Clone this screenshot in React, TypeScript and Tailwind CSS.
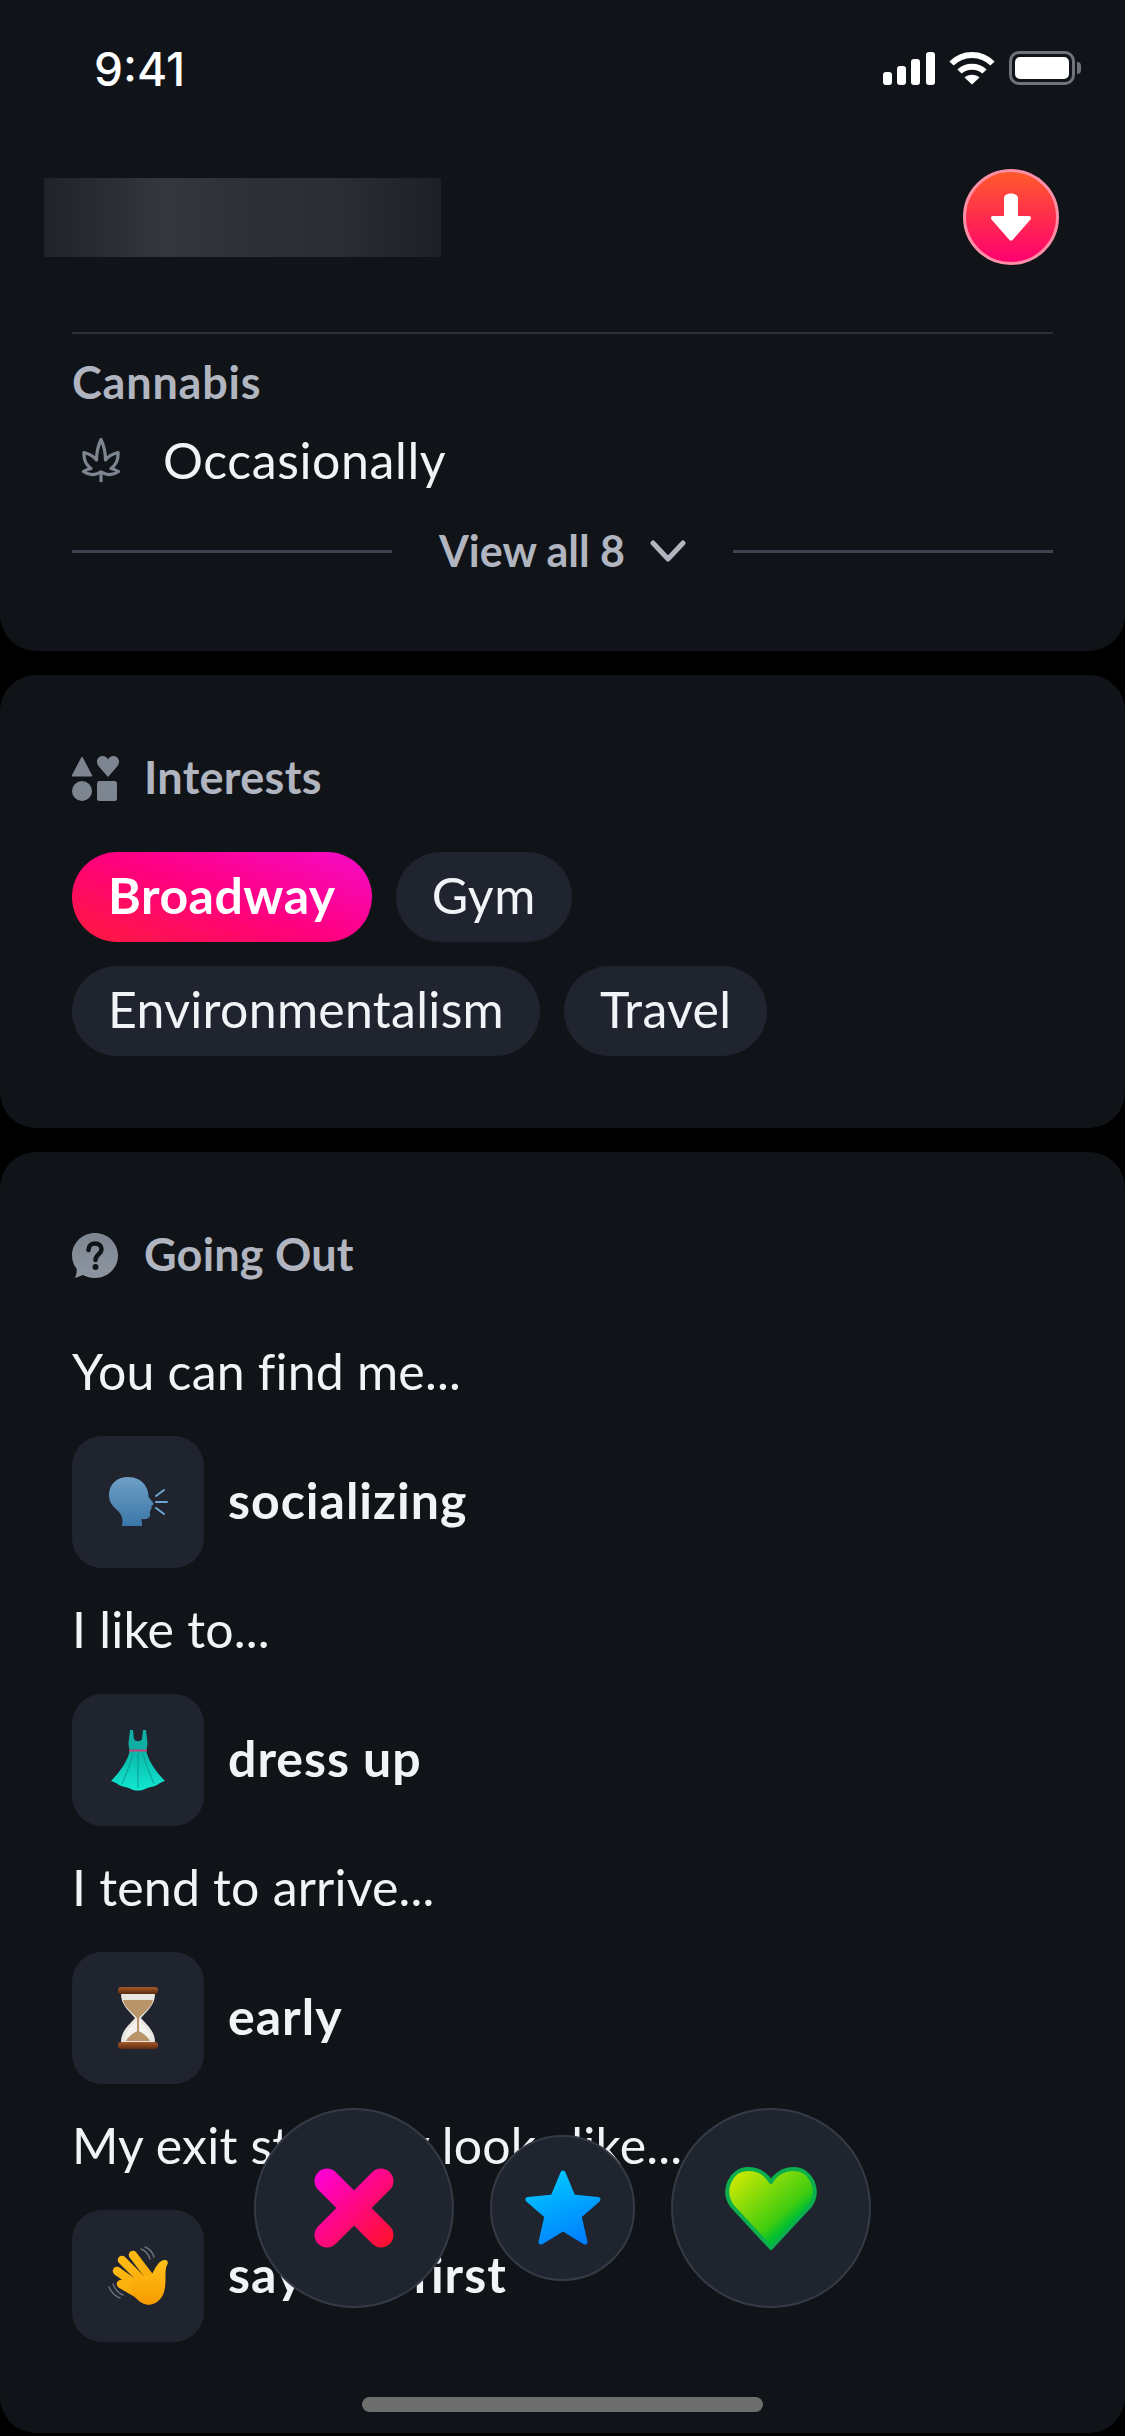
const promptRows = [
  { label: "You can find me...", answer: "socializing", emoji: "talk" },
  { label: "I like to...", answer: "dress up", emoji: "dress" },
  { label: "I tend to arrive...", answer: "early", emoji: "hourglass" },
  { label: "My exit strategy looks like...", answer: "say bye first", emoji: "wave" },
];

function StatusIcons() {
  return (
    <div className="flex items-center gap-[14px]">
      <svg width="52" height="33" viewBox="0 0 52 33" fill="#fff">
        <rect x="0" y="20" width="9" height="13" rx="3" />
        <rect x="14" y="14" width="9" height="19" rx="3" />
        <rect x="28" y="7" width="9" height="26" rx="3" />
        <rect x="43" y="0" width="9" height="33" rx="3" />
      </svg>
      <svg width="46" height="34" viewBox="0 0 46 34" fill="none" stroke="#fff" strokeWidth="6">
        <path d="M2.5 12.5C13.5 1 32.500 1 43.500 12.500" />
        <path d="M10.500 20.500C17 14 29 14 35.500 20.500" />
        <path d="M23 33.500L15.500 26.500C19.500 22.800 26.500 22.800 30.500 26.500Z" fill="#fff" stroke="none" />
      </svg>
      <div className="flex items-center gap-[2px]">
        <div className="w-[66px] h-[34px] rounded-[10px] border-[3px] border-[#70747a] p-[3px]">
          <div className="w-full h-full rounded-[5px] bg-white" />
        </div>
        <div className="w-[4px] h-[12px] rounded-r-full bg-[#70747a]" />
      </div>
    </div>
  );
}

function LeafIcon() {
  return (
    <svg width="42" height="44" viewBox="0 0 42 44" fill="none" stroke="#7d8590" strokeWidth="3.200" strokeLinejoin="round">
      <path d="M21 1.500C24 8 25.500 14 25.500 22C28 18.500 32 16 38 14.500C38.500 21.500 36 27 31 30.500C33.500 31 36 32 38.500 33.500C34.500 36.500 29.500 37.500 24.500 35.500L21 34L17.500 35.500C12.500 37.500 7.500 36.500 3.500 33.500C6 32 8.500 31 11 30.500C6 27 3.500 21.500 4 14.500C10 16 14 18.500 16.500 22C16.500 14 18 8 21 1.500Z" />
      <path d="M21 34V44" strokeLinecap="round" />
    </svg>
  );
}

function ShapesIcon() {
  return (
    <svg width="47" height="45" viewBox="0 0 47 45" fill="#7d8590">
      <path d="M10 1L20 20H0Z" stroke="#7d8590" strokeWidth="1" strokeLinejoin="round" />
      <circle cx="10" cy="35" r="10" />
      <path d="M36 21L26.500 10C23 5.500 26 0 30.500 0C33 0 35 1.500 36 3.500C37 1.500 39 0 41.500 0C46 0 49 5.500 45.500 10Z" />
      <rect x="25" y="25" width="20" height="20" rx="2.500" />
    </svg>
  );
}

function QuestionIcon() {
  return (
    <svg width="46" height="45" viewBox="0 0 46 45">
      <defs>
        <linearGradient id="bubble" x1="0" y1="0" x2="0" y2="1">
          <stop offset="0" stopColor="#7d8590" />
          <stop offset="1" stopColor="#8d95a0" />
        </linearGradient>
      </defs>
      <path d="M23 0C35.700 0 46 10 46 22.500C46 35 35.700 45 23 45C18.500 45 14.500 44 11 42L3 45C4.500 41.500 5 38.500 4.500 35.500C1.700 32 0 27.500 0 22.500C0 10 10.300 0 23 0Z" fill="url(#bubble)" />
      <path d="M16.500 17C16.500 13 19.500 10.500 23 10.500C27 10.500 29.500 13 29.500 16.500C29.500 21 23.500 21.500 23.500 27" fill="none" stroke="#101418" strokeWidth="4.500" strokeLinecap="round" />
      <circle cx="23.500" cy="34" r="3" fill="#101418" />
    </svg>
  );
}

function TalkEmoji() {
  return (
    <svg width="59" height="50" viewBox="0 0 59 50">
      <defs>
        <linearGradient id="head" x1="0" y1="0" x2="0" y2="1">
          <stop offset="0" stopColor="#6f9fc6" />
          <stop offset="1" stopColor="#3a77a8" />
        </linearGradient>
      </defs>
      <path d="M19 0C8 0 0 7 0 18C0 25 3.500 29 8 33C11 36 15 40 13 49H33C33 46 33 44 32 42C36 42.500 40 42 41 39C41.500 37 41 36 40.500 35C41.500 34.500 42 33.500 41.500 32.500C43 31.500 43 30 42 29C44 28.500 45 27 44 25.500L39.500 20C40 12 34 0 19 0Z" fill="url(#head)" />
      <g stroke="#6fa5cf" strokeWidth="2" strokeLinecap="round">
        <path d="M47 19L55 13" />
        <path d="M47 25H58" />
        <path d="M47 31L55 37" />
      </g>
    </svg>
  );
}

function DressEmoji() {
  return (
    <svg width="54" height="62" viewBox="0 0 54 62">
      <defs>
        <linearGradient id="skirt" x1="0" y1="0" x2="0" y2="1">
          <stop offset="0" stopColor="#0bb5a8" />
          <stop offset="1" stopColor="#10e8d0" />
        </linearGradient>
      </defs>
      <path d="M19 1H22L23 10C24.500 13 29.500 13 31 10L32 1H35L36 10C37 14 36.500 18 35 22H19C17.500 18 17 14 18 10Z" fill="#0fb0a3" />
      <path d="M19 21C17 32 8 44 0 52C3 53 6 54 8 56C12 58 16 58 20 60C24 62 30 62 34 60C38 58 42 58 46 56C48 54 51 53 54 52C46 44 37 32 35 21Z" fill="url(#skirt)" />
      <path d="M18 21.500H36" stroke="#c7407a" strokeWidth="2" />
      <g stroke="#0a9d92" strokeWidth="1" fill="none">
        <path d="M22 24C20 34 15 45 11 55" />
        <path d="M27 24V59" />
        <path d="M32 24C34 34 39 45 43 55" />
      </g>
    </svg>
  );
}

function HourglassEmoji() {
  return (
    <svg width="42" height="62" viewBox="0 0 42 62">
      <defs>
        <linearGradient id="wood" x1="0" y1="0" x2="0" y2="1">
          <stop offset="0" stopColor="#a55a28" />
          <stop offset="1" stopColor="#5e2c12" />
        </linearGradient>
      </defs>
      <path d="M4 7H38C38 18 30 24 24 31C30 38 38 44 38 55H4C4 44 12 38 18 31C12 24 4 18 4 7Z" fill="#e9e6e2" />
      <path d="M6 13H36C35 20 27 25 22 31H20C15 25 7 20 6 13Z" fill="#b89468" />
      <path d="M20 31H22V44C27 47 31 50 33 54H9C11 50 15 47 20 44Z" fill="#b89468" />
      <path d="M9 47C12 41 17 37 20 33V44C16 46 12 48 9 52Z" fill="#f3f1ee" />
      <path d="M33 47C30 41 25 37 22 33V44C26 46 30 48 33 52Z" fill="#f3f1ee" />
      <rect x="1" y="0" width="40" height="7" rx="3" fill="url(#wood)" />
      <rect x="1" y="55" width="40" height="7" rx="3" fill="url(#wood)" />
    </svg>
  );
}

function WaveEmoji() {
  return (
    <svg width="61" height="60" viewBox="0 0 61 60">
      <defs>
        <linearGradient id="hand" x1="0" y1="0" x2="0" y2="1">
          <stop offset="0" stopColor="#ffc21a" />
          <stop offset="1" stopColor="#f79a00" />
        </linearGradient>
        <linearGradient id="fingers" gradientUnits="userSpaceOnUse" x1="10" y1="5" x2="50" y2="55">
          <stop offset="0" stopColor="#ffbf16" />
          <stop offset="1" stopColor="#f9a204" />
        </linearGradient>
      </defs>
      <g fill="none" stroke="#6a7078" strokeWidth="1.500" strokeLinecap="round">
        <path d="M33 3C38 5 41 9 42 13" />
        <path d="M37 1C42 3 45 7 46 11" />
        <path d="M1 41C3 46 7 50 12 52" />
        <path d="M5 38C7 43 10 47 15 49" />
      </g>
      <g stroke="url(#fingers)" strokeWidth="8.500" strokeLinecap="round">
        <path d="M25 9L41 30" />
        <path d="M14 14L34 34" />
        <path d="M9 25L30 40" />
        <path d="M13 38L32 49" />
      </g>
      <path d="M57 14C60 14 60.500 17 59 19C56 24 59 36 56 46C53 56 43 62 34 57C26 52 20 44 24 34L44 28C48 21 51 14 57 14Z" fill="url(#hand)" />
    </svg>
  );
}

const emojis: Record<string, React.ReactNode> = {
  talk: <TalkEmoji />,
  dress: <DressEmoji />,
  hourglass: <HourglassEmoji />,
  wave: <WaveEmoji />,
};

function ActionButtons() {
  return (
    <div className="absolute left-0 top-[2108px] w-full flex items-center justify-center gap-9">
      <div className="w-[200px] h-[200px] rounded-full bg-[#1f242e] border-2 border-[#353b45] flex items-center justify-center">
        <svg width="80" height="80" viewBox="0 0 80 80" fill="none">
          <defs>
            <linearGradient id="cross" gradientUnits="userSpaceOnUse" x1="5" y1="5" x2="75" y2="75">
              <stop offset="0" stopColor="#ff00d4" />
              <stop offset="1" stopColor="#ff1030" />
            </linearGradient>
          </defs>
          <path d="M13 13L67 67M67 13L13 67" stroke="url(#cross)" strokeWidth="25" strokeLinecap="round" />
        </svg>
      </div>
      <div className="w-[145px] h-[146px] rounded-full bg-[#1f242e] border-2 border-[#353b45] flex items-center justify-center">
        <svg width="78" height="76" viewBox="0 0 78 76">
          <defs>
            <linearGradient id="star" x1="0.300" y1="0" x2="0.700" y2="1">
              <stop offset="0" stopColor="#00c8ff" />
              <stop offset="1" stopColor="#0080ff" />
            </linearGradient>
          </defs>
          <path d="M39 3L49 27L74 29.500L55 46L61 72L39 58.500L17 72L23 46L4 29.500L29 27Z" fill="url(#star)" stroke="url(#star)" strokeWidth="5" strokeLinejoin="round" />
        </svg>
      </div>
      <div className="w-[200px] h-[200px] rounded-full bg-[#1f242e] border-2 border-[#353b45] flex items-center justify-center">
        <svg width="94" height="85" viewBox="0 0 94 85">
          <defs>
            <linearGradient id="heart" x1="0" y1="0" x2="1" y2="1">
              <stop offset="0" stopColor="#e2ee00" />
              <stop offset="0.600" stopColor="#40cc10" />
              <stop offset="0.700" stopColor="#00c030" />
              <stop offset="1" stopColor="#00c030" />
            </linearGradient>
          </defs>
          <path d="M47 82L8 40C-3 24 7 3 24 3C35 3 43 9 47 16C51 9 59 3 70 3C87 3 97 24 86 40Z" fill="url(#heart)" stroke="#0dae4e" strokeWidth="4" strokeLinejoin="round" />
        </svg>
      </div>
    </div>
  );
}

export default function App() {
  return (
    <div className="relative w-[1125px] h-[2436px] overflow-hidden bg-black font-[family-name:Lato,sans-serif] text-[#f1f3f6]">
      {/* Top card */}
      <div className="h-[651px] bg-[#101418] rounded-b-[36px]">
        <div className="h-[136px] flex items-center justify-between pl-[94px] pr-[44px]">
          <span className="font-[family-name:Inter,sans-serif] text-[46px] font-medium text-white pt-[2px]">9:41</span>
          <StatusIcons />
        </div>

        <div className="mt-[33px] h-[96px] pl-[44px] pr-[66px] flex items-center justify-between">
          <div className="w-[397px] h-[79px] bg-[linear-gradient(90deg,#202328,#2b2e33_18%,#34373c_30%,#2c2f34_55%,#2b2e33_72%,#1d2025)]" />
          <div className="w-[96px] h-[96px] rounded-full border-[3px] border-[#ff8fa6] bg-[linear-gradient(180deg,#ff5a2a,#ff0070)] flex items-center justify-center">
            <svg width="40" height="48" viewBox="0 0 40 48" fill="#fff">
              <path d="M13 5C13 -1 27 -1 27 5V23H38C40 23 40.500 25 39.500 26.500L21.500 47C20.500 48 19.500 48 18.500 47L0.500 26.500C-0.500 25 0 23 2 23H13Z" />
            </svg>
          </div>
        </div>

        <div className="mt-[67px] mx-[72px] h-[2px] bg-[#2a303a]" />

        <div className="mt-[23px] px-[72px]">
          <p className="h-[50px] leading-[50px] text-[45px] font-bold tracking-[0.8px] text-[#b0b5c0]">Cannabis</p>
          <div className="mt-[23px] h-[60px] flex items-center gap-[41px] pl-[8px]">
            <LeafIcon />
            <span className="text-[50px] leading-[60px] tracking-[0.6px]">Occasionally</span>
          </div>
          <div className="mt-[36px] h-[50px] flex items-center justify-between">
            <div className="w-[320px] h-[3px] bg-[#3f4550]" />
            <div className="flex items-center gap-[25px]">
              <span className="text-[43px] font-bold text-[#b0b5c0]">View all 8</span>
              <svg width="36" height="22" viewBox="0 0 36 22" fill="none" stroke="#b0b5c0" strokeWidth="5" strokeLinecap="round" strokeLinejoin="round">
                <path d="M3 3L18 19L33 3" />
              </svg>
            </div>
            <div className="w-[320px] h-[3px] bg-[#3f4550]" />
          </div>
        </div>
      </div>

      {/* Interests */}
      <div className="mt-[24px] h-[453px] bg-[#101418] rounded-[36px] px-[72px] pt-[80px]">
        <div className="h-[46px] flex items-center gap-[25px]">
          <ShapesIcon />
          <span className="text-[45px] font-bold tracking-[0.3px] text-[#b0b5c0]">Interests</span>
        </div>
        <div className="mt-[51px] flex flex-wrap gap-x-[24px] gap-y-[24px]">
          <span className="h-[90px] leading-[86px] px-[36px] rounded-full text-[50px] font-bold tracking-[0.5px] text-white bg-[linear-gradient(20deg,#ff1a3c,#ff0080_50%,#f50cc8)]">Broadway</span>
          <span className="h-[90px] leading-[86px] px-[36px] rounded-full text-[50px] tracking-[0.6px] bg-[#1f242e]">Gym</span>
          <div className="w-full flex gap-[24px]">
            <span className="h-[90px] leading-[86px] px-[36px] rounded-full text-[50px] tracking-[0.3px] bg-[#1f242e]">Environmentalism</span>
            <span className="h-[90px] leading-[86px] px-[36px] rounded-full text-[50px] tracking-[0.3px] bg-[#1f242e]">Travel</span>
          </div>
        </div>
      </div>

      {/* Going Out prompts */}
      <div className="mt-[24px] h-[1281px] bg-[#101418] rounded-[36px] px-[72px] pt-[80px]">
        <div className="h-[46px] flex items-center gap-[26px]">
          <QuestionIcon />
          <span className="text-[45px] font-bold tracking-[0.2px] text-[#b0b5c0]">Going Out</span>
        </div>
        <div className="mt-[63px] flex flex-col gap-[31px]">
          {promptRows.map((row) => (
            <div key={row.answer} className="flex flex-col gap-[35px]">
              <p className="h-[60px] leading-[60px] text-[50px] tracking-[0.2px]">{row.label}</p>
              <div className="flex items-center gap-[24px]">
                <div className="w-[132px] h-[132px] rounded-[30px] bg-[#1f242e] flex items-center justify-center">
                  {emojis[row.emoji]}
                </div>
                <span className="text-[50px] font-bold tracking-[1px] pb-[4px]">{row.answer}</span>
              </div>
            </div>
          ))}
        </div>
      </div>

      <ActionButtons />

      <div className="absolute left-[362px] top-[2397px] w-[401px] h-[15px] rounded-full bg-[#6e6e6e]" />
    </div>
  );
}
